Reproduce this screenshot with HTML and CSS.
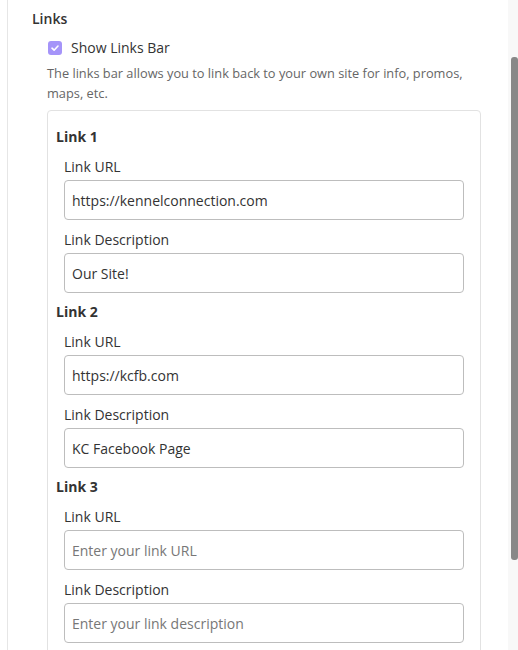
FILE: index.html
```html
<!DOCTYPE html>
<html>
<head>
<meta charset="utf-8">
<link rel="stylesheet" href="styles.css">
</head>
<body>
<div class="frame">
  <main class="content">
    <section class="section">
      <h2 class="section-title">Links</h2>
      <div class="section-body">
        <label class="check">
          <span class="checkbox"><svg viewBox="0 0 14 14" width="14" height="14"><path d="M4 7.2 L6.1 9.2 L10 5" fill="none" stroke="#fff" stroke-width="1.6" stroke-linecap="round" stroke-linejoin="round"/></svg></span>
          <span class="check-label">Show Links Bar</span>
        </label>
        <p class="help">The links bar allows you to link back to your own site for info, promos, maps, etc.</p>
        <div class="card">
          <div class="link-group">
            <h3 class="link-title">Link 1</h3>
            <div class="field">
              <div class="field-label">Link URL</div>
              <div class="input">https://kennelconnection.com</div>
            </div>
            <div class="field">
              <div class="field-label">Link Description</div>
              <div class="input">Our Site!</div>
            </div>
          </div>
          <div class="link-group">
            <h3 class="link-title">Link 2</h3>
            <div class="field">
              <div class="field-label">Link URL</div>
              <div class="input">https://kcfb.com</div>
            </div>
            <div class="field">
              <div class="field-label">Link Description</div>
              <div class="input">KC Facebook Page</div>
            </div>
          </div>
          <div class="link-group">
            <h3 class="link-title">Link 3</h3>
            <div class="field">
              <div class="field-label">Link URL</div>
              <div class="input placeholder">Enter your link URL</div>
            </div>
            <div class="field">
              <div class="field-label">Link Description</div>
              <div class="input placeholder">Enter your link description</div>
            </div>
          </div>
        </div>
      </div>
    </section>
  </main>
  <div class="scrollbar"><div class="thumb"></div></div>
</div>
</body>
</html>
```

FILE: styles.css
```css
* { box-sizing: border-box; }
html, body { margin: 0; padding: 0; background: #fff; }
body {
  font-family: "Open Sans", "Noto Sans", sans-serif;
  color: #333;
  overflow: hidden;
}
.frame {
  display: flex;
  height: 650px;
  overflow: hidden;
}
.content {
  flex: 1;
  margin-left: 7px;
  border-left: 1px solid #e6e6e6;
  padding-left: 24px;
  overflow: hidden;
}
.section-title {
  margin: 0;
  padding-top: 9px;
  font-size: 14px;
  font-weight: 600;
  line-height: 20px;
  color: #333;
}
.section-body {
  padding-left: 15px;
}
.check {
  display: flex;
  align-items: center;
  gap: 9px;
  margin-top: 9px;
  margin-left: 1px;
  height: 20px;
}
.checkbox {
  width: 14px;
  height: 14px;
  border-radius: 3px;
  background: #a594f9;
  display: flex;
}
.check-label {
  font-size: 14px;
  line-height: 20px;
  color: #333;
}
.help {
  margin: 5px 0 0 0;
  max-width: 425px;
  font-size: 12.8px;
  line-height: 20px;
  color: #666;
}
.card {
  margin-top: 7px;
  width: 434px;
  border: 1px solid #e2e2e2;
  border-radius: 4px;
  padding: 16px 16px 20px 8px;
}
.link-group + .link-group { margin-top: 9px; }
.link-title {
  margin: 0;
  font-size: 14px;
  font-weight: 700;
  line-height: 20px;
  color: #333;
}
.field {
  margin-top: 10px;
  padding-left: 8px;
}
.field-label {
  font-size: 14px;
  line-height: 20px;
  color: #333;
  margin-bottom: 3px;
}
.input {
  height: 40px;
  border: 1px solid #bdbdbd;
  border-radius: 4px;
  padding: 0 7px;
  display: flex;
  align-items: center;
  font-size: 14px;
  color: #333;
  background: #fff;
}
.input.placeholder { color: #777; }
.scrollbar {
  width: 10px;
  background: #f8f8f8;
  padding-left: 3px;
  padding-top: 57px;
}
.thumb {
  width: 7px;
  height: 503px;
  background: #888;
  border-radius: 3px;
}
```
